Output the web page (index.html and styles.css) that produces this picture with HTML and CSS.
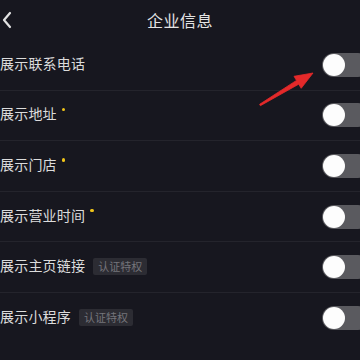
FILE: index.html
```html
<!DOCTYPE html>
<html lang="zh">
<head>
<meta charset="utf-8">
<link rel="stylesheet" href="styles.css">
</head>
<body>
<div class="page">
  <header class="topbar">
    <svg class="back" width="12" height="18" viewBox="0 0 12 18"><path d="M9 2 L3 9 L9 16" fill="none" stroke="#e2e2e2" stroke-width="2.2" stroke-linecap="round" stroke-linejoin="round"/></svg>
    <h1 class="title">企业信息</h1>
  </header>
  <ul class="list">
    <li class="row"><span class="label">展示联系电话</span><span class="toggle"><span class="knob"></span></span></li>
    <li class="row"><span class="label">展示地址</span><span class="dot"></span><span class="toggle"><span class="knob"></span></span></li>
    <li class="row"><span class="label">展示门店</span><span class="dot"></span><span class="toggle"><span class="knob"></span></span></li>
    <li class="row"><span class="label">展示营业时间</span><span class="dot"></span><span class="toggle"><span class="knob"></span></span></li>
    <li class="row"><span class="label">展示主页链接</span><span class="badge">认证特权</span><span class="toggle"><span class="knob"></span></span></li>
    <li class="row last"><span class="label">展示小程序</span><span class="badge">认证特权</span><span class="toggle"><span class="knob"></span></span></li>
  </ul>
  <svg class="arrow" width="64" height="44" viewBox="0 0 64 44"><polygon points="58,5 46.2,20.3 43.7,16.2 5.4,37.7 4.6,36.3 41.5,12.4 39,8.3" fill="#e4292a" stroke="#e4292a" stroke-width="0.8" stroke-linejoin="round"/></svg>
</div>
</body>
</html>
```
FILE: styles.css
```css
html, body {
  margin: 0;
  padding: 0;
  background: #17171f;
}
.page {
  position: relative;
  width: 360px;
  height: 360px;
  overflow: hidden;
  font-family: "Noto Sans CJK SC", "Noto Sans", sans-serif;
  color: #dedede;
}
.topbar {
  height: 40px;
  display: flex;
  align-items: center;
  justify-content: center;
  position: relative;
}
.back {
  position: absolute;
  left: 1px;
  top: 11px;
}
.title {
  margin: 0;
  font-size: 16px;
  font-weight: 400;
  color: #e4e4e4;
  letter-spacing: 0.5px;
}
.list {
  list-style: none;
  margin: 0;
  padding: 0;
}
.row {
  height: 50.6px;
  box-sizing: border-box;
  border-bottom: 1px solid #24242c;
  display: flex;
  align-items: center;
  padding-left: 0;
}
.row.last {
  border-bottom: none;
}
.label {
  font-size: 14px;
  color: #dcdcdc;
  letter-spacing: 0.2px;
  margin-bottom: 4px;
}
.dot {
  width: 3.5px;
  height: 3.5px;
  border-radius: 50%;
  background: #f0c419;
  margin-left: 5px;
  margin-bottom: 12px;
}
.badge {
  margin-left: 8px;
  background: #2c2c33;
  color: #75757b;
  font-size: 11px;
  height: 17px;
  line-height: 17px;
  padding: 0 5px;
  border-radius: 2px;
  margin-bottom: 2px;
}
.toggle {
  margin-left: auto;
  width: 48px;
  height: 24px;
  border-radius: 12px;
  background: #5a5a5f;
  margin-right: -10px;
  display: flex;
  align-items: center;
  padding-left: 1px;
  box-sizing: border-box;
}
.knob {
  width: 22px;
  height: 22px;
  border-radius: 50%;
  background: #fdfdfd;
}
.arrow {
  position: absolute;
  left: 255px;
  top: 68px;
}
```
